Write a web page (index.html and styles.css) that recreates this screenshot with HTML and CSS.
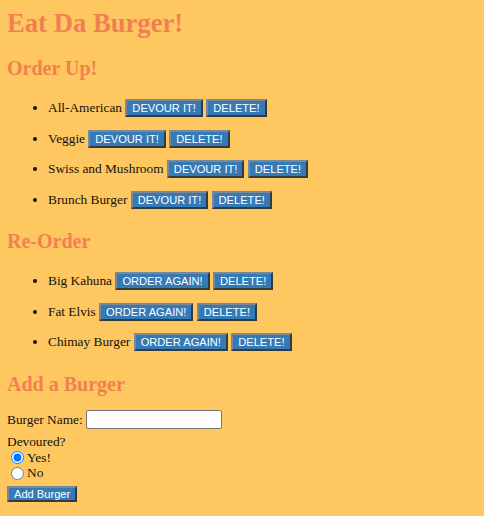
FILE: index.html
```html
<!DOCTYPE html>
<html>
<head>
<meta charset="utf-8">
<title>Eat Da Burger!</title>
<link rel="stylesheet" href="styles.css">
</head>
<body class="page">
<h1 class="title">Eat Da Burger!</h1>
<h2 class="section">Order Up!</h2>
<ul class="burgers">
  <li class="burger">All-American <button class="btn">DEVOUR IT!</button> <button class="btn">DELETE!</button></li>
  <li class="burger">Veggie <button class="btn">DEVOUR IT!</button> <button class="btn">DELETE!</button></li>
  <li class="burger">Swiss and Mushroom <button class="btn">DEVOUR IT!</button> <button class="btn">DELETE!</button></li>
  <li class="burger">Brunch Burger <button class="btn">DEVOUR IT!</button> <button class="btn">DELETE!</button></li>
</ul>
<h2 class="section">Re-Order</h2>
<ul class="burgers">
  <li class="burger">Big Kahuna <button class="btn">ORDER AGAIN!</button> <button class="btn">DELETE!</button></li>
  <li class="burger">Fat Elvis <button class="btn">ORDER AGAIN!</button> <button class="btn">DELETE!</button></li>
  <li class="burger">Chimay Burger <button class="btn">ORDER AGAIN!</button> <button class="btn">DELETE!</button></li>
</ul>
<h2 class="section form-title">Add a Burger</h2>
<form class="add-form">
  <label class="name-row">Burger Name:&nbsp;<input class="name-input" type="text"></label>
  <div class="devoured">Devoured?</div>
  <label class="radio-row"><input class="radio" type="radio" name="devoured" checked>Yes!</label>
  <label class="radio-row"><input class="radio" type="radio" name="devoured">No</label>
  <button class="btn add-btn" type="submit">Add Burger</button>
</form>
</body>
</html>
```
FILE: styles.css
```css
.page {
  margin: 8px 7px;
  background: #ffc75f;
  font-family: "Liberation Serif", "Times New Roman", serif;
  font-size: 13.33px;
  color: #111;
}
.title {
  color: #f27f52;
  font-size: 26.67px;
  line-height: 30px;
  margin: 0 0 18px;
}
.section {
  color: #f27f52;
  font-size: 20px;
  line-height: 24px;
  margin: 19px 0 18px;
}
.title + .section {
  margin-top: 18px;
}
.form-title {
  margin-top: 20px;
  margin-bottom: 13.5px;
}
.burgers {
  margin: 0;
  padding-left: 41px;
}
.burger {
  margin: 10.7px 0;
  line-height: 20px;
}
.btn {
  box-sizing: border-box;
  height: 18px;
  font-family: "Liberation Sans", Arial, sans-serif;
  font-size: 11.11px;
  line-height: 12px;
  background: #337ab7;
  color: #fff;
  border: 2px outset #7c8794;
  padding: 0 5px;
  margin: 0;
  vertical-align: baseline;
}
.add-form {
  display: flex;
  flex-direction: column;
  align-items: flex-start;
}
.name-row {
  display: flex;
  align-items: center;
  height: 20px;
  line-height: 20px;
}
.name-input {
  box-sizing: border-box;
  width: 136px;
  height: 19px;
  margin: 0;
  padding: 1px 2px;
  border: 1px solid #767676;
  border-radius: 2px;
  background: #fff;
}
.devoured {
  line-height: 16px;
  margin-top: 4px;
}
.radio-row {
  display: flex;
  align-items: center;
  height: 15.5px;
  line-height: 16px;
}
.radio {
  width: 13px;
  height: 13px;
  margin: 0 3px 0 4px;
}
.add-btn {
  height: 16px;
  margin-top: 5px;
  line-height: 12px;
}
```
